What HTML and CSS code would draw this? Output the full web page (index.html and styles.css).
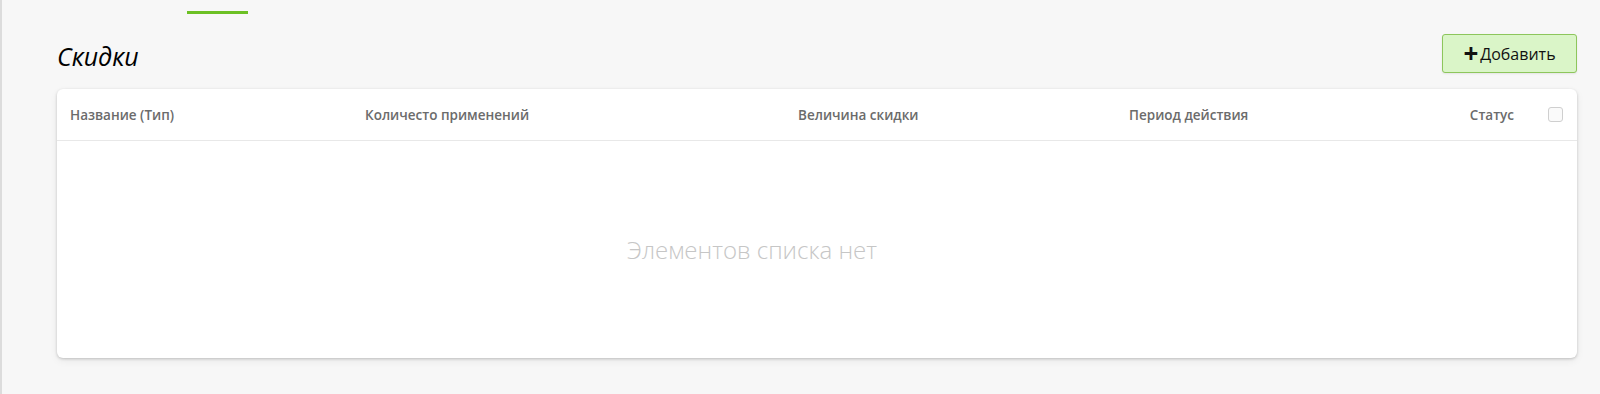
FILE: index.html
```html
<!DOCTYPE html>
<html lang="ru">
<head>
    <meta charset="UTF-8">
    <meta name="viewport" content="width=device-width, initial-scale=1.0">
    <title>Скидки</title>
    <link rel="stylesheet" href="styles.css">
</head>
<body>
    <div class="page">
        <nav class="tabs">
            <span class="tab active"></span>
        </nav>
        <main class="content">
            <div class="title-row">
                <h1>Скидки</h1>
                <button class="add-button"><span class="plus">+</span>Добавить</button>
            </div>
            <section class="card">
                <div class="table-head">
                    <span>Название (Тип)</span>
                    <span>Количесто применений</span>
                    <span>Величина скидки</span>
                    <span>Период действия</span>
                    <span class="status">Статус</span>
                    <span class="checkbox"></span>
                </div>
                <div class="empty">Элементов списка нет</div>
            </section>
        </main>
    </div>
</body>
</html>
```

FILE: styles.css
```css
body {
    margin: 0;
    background-color: #f7f7f7;
    font-family: "Open Sans", "Noto Sans", sans-serif;
    color: #000;
}
.page {
    border-left: 2px solid #dcdcdc;
    min-height: 394px;
    box-sizing: border-box;
}
.tabs {
    height: 14px;
    padding-left: 185px;
    display: flex;
    align-items: flex-end;
}
.tab {
    width: 61px;
    height: 3px;
}
.tab.active {
    background-color: #6cc024;
}
.content {
    padding: 20px 23px 0 55px;
}
.title-row {
    display: flex;
    justify-content: space-between;
    align-items: center;
    height: 39px;
    margin-bottom: 16px;
}
h1 {
    margin: 0;
    font-size: 25px;
    font-weight: 400;
    font-style: italic;
    position: relative;
    top: 2px;
}
.add-button {
    height: 39px;
    width: 135px;
    box-sizing: border-box;
    background-color: #daf5c8;
    border: 1px solid #8dc65c;
    border-radius: 3px;
    font-family: inherit;
    font-size: 16px;
    color: #111;
    display: flex;
    align-items: center;
    justify-content: center;
    padding: 0;
    cursor: pointer;
    box-shadow: 0 1px 2px rgba(0, 0, 0, 0.08);
}
.plus {
    font-size: 26px;
    font-weight: 700;
    line-height: 1;
    margin-right: 2px;
    position: relative;
    top: -1px;
}
.card {
    background-color: #fff;
    border-radius: 6px;
    box-shadow: 0 1px 3px rgba(0, 0, 0, 0.2), 0 3px 8px rgba(0, 0, 0, 0.06);
    height: 269px;
    display: flex;
    flex-direction: column;
}
.table-head {
    display: grid;
    grid-template-columns: 295px 433px 331px 1fr auto auto;
    align-items: center;
    height: 51px;
    padding: 0 14px 0 13px;
    border-bottom: 1px solid #e8e8e8;
    font-size: 13.5px;
    font-weight: 600;
    color: #6b6b6b;
}
.status {
    text-align: right;
}
.checkbox {
    width: 13px;
    height: 13px;
    border: 1px solid #cfcfcf;
    border-radius: 3px;
    margin-left: 34px;
    background-color: #fafafa;
}
.empty {
    flex: 1;
    display: flex;
    align-items: center;
    justify-content: center;
    padding-right: 130px;
    font-size: 24px;
    font-weight: 300;
    color: #c6c6c6;
}
```
